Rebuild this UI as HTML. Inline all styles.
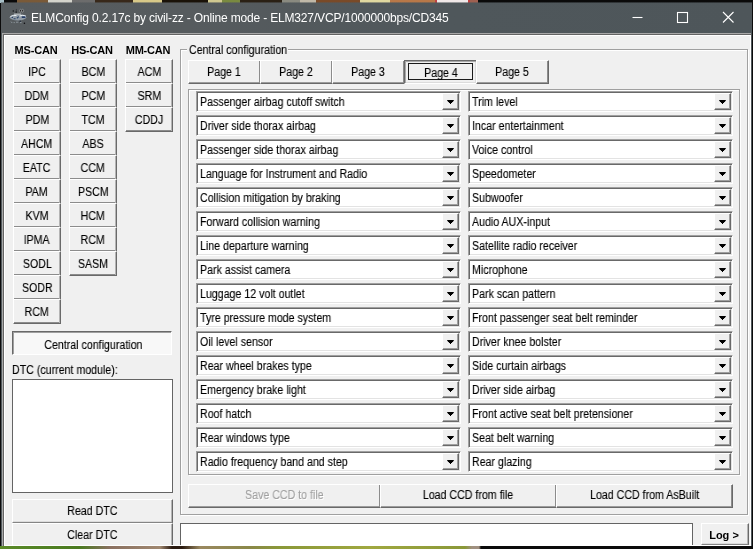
<!DOCTYPE html>
<html lang="en">
<head>
<meta charset="utf-8">
<title>ELMConfig</title>
<style>
html,body{margin:0;padding:0}
body{width:753px;height:549px;overflow:hidden;background:#0b0b0b;position:relative;font-family:"Liberation Sans",Arial,sans-serif;font-size:12px;color:#000}
b{font-weight:normal;display:inline-block;will-change:transform;-webkit-text-stroke:0.12px currentColor;transform:scaleX(.886);transform-origin:50% 50%;white-space:nowrap}
.bgtop{position:absolute;left:0;top:0;width:753px;height:3px;background:linear-gradient(90deg,#a8c0c8 0px,#a8c0c8 4px,#0a0a0a 4px,#0a0a0a 17px,#7a5a38 17px,#7a5a38 48px,#d4d4cc 48px,#d4d4cc 72px,#6c6c6c 72px,#6c6c6c 95px,#38281a 95px,#38281a 133px,#d8c888 133px,#d8c888 162px,#1a1208 162px,#1a1208 208px,#d0c890 208px,#d0c890 222px,#7a8a40 222px,#7a8a40 240px,#2a2014 240px,#2a2014 282px,#8a8a80 282px,#8a8a80 300px,#c0b8a8 300px,#c0b8a8 316px,#7a4a28 316px,#7a4a28 360px,#e0d8a0 360px,#e0d8a0 390px,#b87848 390px,#b87848 435px,#c04040 435px,#c04040 437px,#f0e8e8 437px,#f0e8e8 468px,#c04040 468px,#c04040 470px,#a06050 470px,#a06050 478px,#0a0a0a 478px,#0a0a0a 753px)}
.bgbot{position:absolute;left:0;top:546px;width:753px;height:3px;background:linear-gradient(90deg,#5a8a28 0,#4a7a20 80px,#8a7060 110px,#a08870 160px,#2a1a10 172px,#2a1a10 182px,#9a8860 200px,#8a8848 250px,#8a9838 280px,#a0a840 370px,#8a9838 465px,#a09080 472px,#a09080 479px,#0a0a0a 481px,#0a0a0a 753px)}
.win{position:absolute;left:1px;top:2px;width:751px;height:544px;background:#50585c;overflow:hidden}
.titlebar{position:absolute;left:0;top:0;width:751px;height:31px;background:linear-gradient(90deg,#575c5f 0,#565b5e 25%,#4f575b 60%,#4e565a 100%);color:#fff}
.appicon{position:absolute;left:3px;top:4px}
.title{position:absolute;left:29.8px;top:9px;font-size:12px;white-space:nowrap;letter-spacing:-0.165px}
.ctl{position:absolute;left:631px;top:8px}
.client{position:absolute;left:1px;top:31px;width:749px;height:513px;overflow:hidden;background:#f0f0f0}
.client:after{content:"";position:absolute;left:0;top:0;width:749px;height:513px;z-index:5;box-shadow:inset 1px 1px 0 #a8a8a8,inset 2px 2px 0 #646464,inset 3px 3px 0 #fff,inset -1px -1px 0 #fff}
/* coordinates inside client use page coords minus (2,33): shift children */
.client>*{margin-left:-2px;margin-top:-33px}
.btn{position:absolute;box-sizing:border-box;background:#f0f0f0;text-align:center;line-height:24px;white-space:nowrap;border-top:1px solid #fff;border-left:1px solid #fff;border-right:1px solid #6a6a6a;border-bottom:1px solid #858585;box-shadow:inset -1px 0 0 #b4b4b4,inset 0 -1px 0 #dcdcdc}
.btn.mod{width:48px;height:25px;border-bottom-color:#696969;box-shadow:inset -1px 0 0 #b4b4b4,inset 0 -1px 0 #8c8c8c}
.btn.page{width:73px;height:24px;line-height:22px}
.btn.row,.btn.page{border-right-color:#696969;border-bottom-color:#696969;box-shadow:inset -1px 0 0 #8c8c8c,inset 0 -1px 0 #9c9c9c}
.btn.row{line-height:20px}
.btn.down{border-top:1px solid #696969;border-left:1px solid #696969;border-right:1px solid #fff;border-bottom:1px solid #fff;box-shadow:inset 1px 1px 0 #a0a0a0;background:#f8f8f8;padding:1px 0 0 3px}
.btn.disabled{color:#a0a0a0;text-shadow:1px 1px 0 #fff}
.btn.bold{font-weight:bold;font-size:11px}
.btn.focus span{position:absolute;left:3px;top:2px;width:65px;height:17px;box-sizing:border-box;border:1px solid #1a1a1a}
.colhdr{position:absolute;top:44px;width:48px;text-align:center;font-weight:bold;white-space:nowrap;font-size:11px;letter-spacing:-0.2px}
.lbl,.grouplbl{position:absolute;white-space:nowrap}
.lbl b,.grouplbl b{transform-origin:0 50%}
.grouplbl{background:#f0f0f0;padding:0 0 0 2px;width:99px;overflow:hidden}
.group{position:absolute;box-sizing:border-box;border:1px solid #a0a0a0;box-shadow:inset 1px 1px 0 #fff,1px 1px 0 #fff}
.sunken{position:absolute;box-sizing:border-box;background:#fff;border-top:1px solid #a0a0a0;border-left:1px solid #a0a0a0;border-right:1px solid #fff;border-bottom:1px solid #fff;box-shadow:inset 1px 1px 0 #696969,inset -1px -1px 0 #e3e3e3}
.combo{position:absolute;box-sizing:border-box;width:265px;height:21px;background:#fff;border-top:1px solid #a0a0a0;border-left:1px solid #a0a0a0;border-right:1px solid #fff;border-bottom:1px solid #fff;box-shadow:inset 1px 1px 0 #696969,inset -1px -1px 0 #e3e3e3}
.combo b{position:absolute;left:3px;top:3px;line-height:14px;transform-origin:0 50%}
.combo i{position:absolute;right:1px;top:1px;width:17px;height:17px;box-sizing:border-box;background:#f0f0f0;border-top:1px solid #fff;border-left:1px solid #fff;border-right:1px solid #696969;border-bottom:1px solid #696969;box-shadow:inset -1px -1px 0 #a0a0a0}
.combo i:after{content:"";position:absolute;left:3.8px;top:5.8px;width:7.4px;height:4.3px;background:#000;clip-path:polygon(0.00px 0.00px,7.40px 0.00px,7.40px 1.07px,6.34px 1.07px,6.34px 2.15px,5.29px 2.15px,5.29px 3.22px,4.23px 3.22px,4.23px 4.30px,3.17px 4.30px,3.17px 3.22px,2.11px 3.22px,2.11px 2.15px,1.06px 2.15px,1.06px 1.07px,0.00px 1.07px)}
.flat{position:absolute;box-sizing:border-box;background:#fff;border:1px solid #646464}
.btn.page.focus{border-top:1px solid #6a6a6a;border-left:1px solid #6a6a6a;border-right:1px solid #fff;border-bottom:1px solid #fff;box-shadow:inset 1px 1px 0 #a8a8a8,inset -1px -1px 0 #dcdcdc;padding:1px 0 0 2px}
.title,.colhdr,.btn.bold{will-change:transform}
.bgtop2{position:absolute;left:0;top:2px;width:753px;height:1px;background:linear-gradient(90deg,#a8c0c8 0px,#a8c0c8 4px,#0a0a0a 4px,#0a0a0a 17px,#7a5a38 17px,#7a5a38 48px,#d4d4cc 48px,#d4d4cc 72px,#6c6c6c 72px,#6c6c6c 95px,#38281a 95px,#38281a 133px,#d8c888 133px,#d8c888 162px,#1a1208 162px,#1a1208 208px,#d0c890 208px,#d0c890 222px,#7a8a40 222px,#7a8a40 240px,#2a2014 240px,#2a2014 282px,#8a8a80 282px,#8a8a80 300px,#c0b8a8 300px,#c0b8a8 316px,#7a4a28 316px,#7a4a28 360px,#e0d8a0 360px,#e0d8a0 390px,#b87848 390px,#b87848 435px,#c04040 435px,#c04040 437px,#f0e8e8 437px,#f0e8e8 468px,#c04040 468px,#c04040 470px,#a06050 470px,#a06050 478px,#0a0a0a 478px,#0a0a0a 753px);opacity:.45}
</style>
</head>
<body>
<div class="bgtop"></div><div class="bgbot"></div>
<div class="win">
<div class="titlebar"><svg class="appicon" width="30" height="22" viewBox="0 0 30 22"><ellipse cx="14" cy="11.3" rx="8.3" ry="3.1" fill="#a9b7c3" opacity=".7"/><path d="M6.5 10.6q3-1.8 6-1.2M15.5 10q3.5-1.6 6.5.2" stroke="#eef4f8" stroke-width="1" fill="none"/><rect x="17.8" y="10.4" width="3.6" height="1.5" fill="#1a3260"/><path d="M7.6 11.4h1.4M12.8 12.2l2-1.6M9.6 12.8h2" stroke="#2c4468" stroke-width="1.1" fill="none"/><rect x="10" y="7.6" width="7.2" height="1" fill="#c9cdd0"/><circle cx="9.3" cy="5" r=".8" fill="#15171a"/><circle cx="12.2" cy="6.1" r=".8" fill="#15171a"/><circle cx="12.4" cy="3.9" r=".6" fill="#2a2d30"/><ellipse cx="16.6" cy="4.7" rx=".9" ry="1.4" fill="#111" stroke="#b8bcbf" stroke-width=".6"/><ellipse cx="18.7" cy="4.7" rx=".9" ry="1.4" fill="#111" stroke="#b8bcbf" stroke-width=".6"/><path d="M7 15.6l1.2 1.4M9.6 16.6h1.2M12 16.2h2.4M16 16.6h1.6" stroke="#9aa5ab" stroke-width=".8" fill="none"/><circle cx="16.2" cy="15.2" r=".7" fill="#1a2438"/><circle cx="20.4" cy="17.3" r=".8" fill="#0c0c0e"/></svg><span class="title">ELMConfig 0.2.17c by civil-zz - Online mode - ELM327/VCP/1000000bps/CD345</span>
<svg class="ctl" width="120" height="14" viewBox="0 0 120 14" fill="none" stroke="#fff" stroke-width="1.1"><path d="M0.5 7.5h10"/><rect x="45.5" y="2.5" width="10" height="10"/><path d="M91 2l10.5 10.5M101.5 2L91 12.5"/></svg></div>
<div class="client">
<div class="colhdr" style="left:12px">MS-CAN</div>
<div class="btn mod" style="left:13px;top:59px"><b>IPC</b></div>
<div class="btn mod" style="left:13px;top:83px"><b>DDM</b></div>
<div class="btn mod" style="left:13px;top:107px"><b>PDM</b></div>
<div class="btn mod" style="left:13px;top:131px"><b>AHCM</b></div>
<div class="btn mod" style="left:13px;top:155px"><b>EATC</b></div>
<div class="btn mod" style="left:13px;top:179px"><b>PAM</b></div>
<div class="btn mod" style="left:13px;top:203px"><b>KVM</b></div>
<div class="btn mod" style="left:13px;top:227px"><b>IPMA</b></div>
<div class="btn mod" style="left:13px;top:251px"><b>SODL</b></div>
<div class="btn mod" style="left:13px;top:275px"><b>SODR</b></div>
<div class="btn mod" style="left:13px;top:299px"><b>RCM</b></div>
<div class="colhdr" style="left:68px">HS-CAN</div>
<div class="btn mod" style="left:69px;top:59px"><b>BCM</b></div>
<div class="btn mod" style="left:69px;top:83px"><b>PCM</b></div>
<div class="btn mod" style="left:69px;top:107px"><b>TCM</b></div>
<div class="btn mod" style="left:69px;top:131px"><b>ABS</b></div>
<div class="btn mod" style="left:69px;top:155px"><b>CCM</b></div>
<div class="btn mod" style="left:69px;top:179px"><b>PSCM</b></div>
<div class="btn mod" style="left:69px;top:203px"><b>HCM</b></div>
<div class="btn mod" style="left:69px;top:227px"><b>RCM</b></div>
<div class="btn mod" style="left:69px;top:251px"><b>SASM</b></div>
<div class="colhdr" style="left:124px">MM-CAN</div>
<div class="btn mod" style="left:125px;top:59px"><b>ACM</b></div>
<div class="btn mod" style="left:125px;top:83px"><b>SRM</b></div>
<div class="btn mod" style="left:125px;top:107px"><b>CDDJ</b></div>
<div class="btn down" style="left:12px;top:331px;width:160px;height:24px"><b>Central configuration</b></div>
<div class="lbl" style="left:12px;top:363px"><b>DTC (current module):</b></div>
<div class="flat" style="left:12px;top:379px;width:161px;height:114px"></div>
<div class="btn" style="left:12px;top:499px;width:161px;height:24px;line-height:22px"><b>Read DTC</b></div>
<div class="btn" style="left:12px;top:523px;width:161px;height:24px;line-height:22px"><b>Clear DTC</b></div>
<div class="group" style="left:180px;top:49px;width:568px;height:466px"></div>
<div class="grouplbl" style="left:187px;top:43px"><b>Central configuration</b></div>
<div class="btn page" style="left:188px;top:60px"><b>Page 1</b></div>
<div class="btn page" style="left:260px;top:60px"><b>Page 2</b></div>
<div class="btn page" style="left:332px;top:60px"><b>Page 3</b></div>
<div class="btn page focus" style="left:404px;top:60px"><span></span><b>Page 4</b></div>
<div class="btn page" style="left:476px;top:60px"><b>Page 5</b></div>
<div class="group" style="left:188px;top:89px;width:552px;height:386px"></div>
<div class="combo" style="left:196px;top:91px"><b>Passenger airbag cutoff switch</b><i></i></div>
<div class="combo" style="left:468px;top:91px"><b>Trim level</b><i></i></div>
<div class="combo" style="left:196px;top:115px"><b>Driver side thorax airbag</b><i></i></div>
<div class="combo" style="left:468px;top:115px"><b>Incar entertainment</b><i></i></div>
<div class="combo" style="left:196px;top:139px"><b>Passenger side thorax airbag</b><i></i></div>
<div class="combo" style="left:468px;top:139px"><b>Voice control</b><i></i></div>
<div class="combo" style="left:196px;top:163px"><b>Language for Instrument and Radio</b><i></i></div>
<div class="combo" style="left:468px;top:163px"><b>Speedometer</b><i></i></div>
<div class="combo" style="left:196px;top:187px"><b>Collision mitigation by braking</b><i></i></div>
<div class="combo" style="left:468px;top:187px"><b>Subwoofer</b><i></i></div>
<div class="combo" style="left:196px;top:211px"><b>Forward collision warning</b><i></i></div>
<div class="combo" style="left:468px;top:211px"><b>Audio AUX-input</b><i></i></div>
<div class="combo" style="left:196px;top:235px"><b>Line departure warning</b><i></i></div>
<div class="combo" style="left:468px;top:235px"><b>Satellite radio receiver</b><i></i></div>
<div class="combo" style="left:196px;top:259px"><b>Park assist camera</b><i></i></div>
<div class="combo" style="left:468px;top:259px"><b>Microphone</b><i></i></div>
<div class="combo" style="left:196px;top:283px"><b>Luggage 12 volt outlet</b><i></i></div>
<div class="combo" style="left:468px;top:283px"><b>Park scan pattern</b><i></i></div>
<div class="combo" style="left:196px;top:307px"><b>Tyre pressure mode system</b><i></i></div>
<div class="combo" style="left:468px;top:307px"><b>Front passenger seat belt reminder</b><i></i></div>
<div class="combo" style="left:196px;top:331px"><b>Oil level sensor</b><i></i></div>
<div class="combo" style="left:468px;top:331px"><b>Driver knee bolster</b><i></i></div>
<div class="combo" style="left:196px;top:355px"><b>Rear wheel brakes type</b><i></i></div>
<div class="combo" style="left:468px;top:355px"><b>Side curtain airbags</b><i></i></div>
<div class="combo" style="left:196px;top:379px"><b>Emergency brake light</b><i></i></div>
<div class="combo" style="left:468px;top:379px"><b>Driver side airbag</b><i></i></div>
<div class="combo" style="left:196px;top:403px"><b>Roof hatch</b><i></i></div>
<div class="combo" style="left:468px;top:403px"><b>Front active seat belt pretensioner</b><i></i></div>
<div class="combo" style="left:196px;top:427px"><b>Rear windows type</b><i></i></div>
<div class="combo" style="left:468px;top:427px"><b>Seat belt warning</b><i></i></div>
<div class="combo" style="left:196px;top:451px"><b>Radio frequency band and step</b><i></i></div>
<div class="combo" style="left:468px;top:451px"><b>Rear glazing</b><i></i></div>
<div class="btn row disabled" style="left:188px;top:484px;width:193px;height:24px"><b>Save CCD to file</b></div>
<div class="btn row" style="left:380px;top:484px;width:177px;height:24px"><b>Load CCD from file</b></div>
<div class="btn row" style="left:556px;top:484px;width:177px;height:24px"><b>Load CCD from AsBuilt</b></div>
<div class="flat" style="left:180px;top:523px;width:513px;height:24px"></div>
<div class="btn bold" style="left:701px;top:523px;width:48px;height:22px;line-height:22px;padding-right:2px">Log &gt;</div>
</div></div>
<div class="bgtop2"></div>
</body>
</html>
